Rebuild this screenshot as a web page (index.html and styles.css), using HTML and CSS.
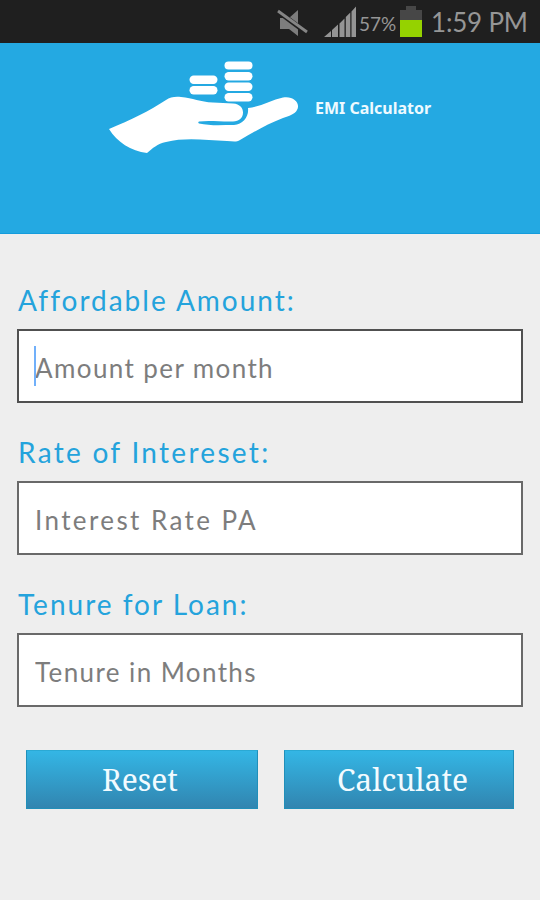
FILE: index.html
```html
<!DOCTYPE html>
<html lang="en">
<head>
    <meta charset="UTF-8">
    <meta name="viewport" content="width=device-width, initial-scale=1.0">
    <title>EMI Calculator</title>
    <link rel="stylesheet" href="styles.css">
</head>
<body>
    <div class="status-bar">
        <svg class="mute-icon" width="32" height="30" viewBox="0 0 32 30">
            <path d="M3 9h9l9-8v26l-9-7H3z" fill="#7d7d7d"/>
            <path d="M-1 1L30 24" stroke="#1f1f1f" stroke-width="5"/>
            <path d="M1 2L30 23" stroke="#858585" stroke-width="2.800"/>
        </svg>
        <svg class="signal-icon" width="33" height="32" viewBox="0 0 33 32">
            <path d="M0 31L7 25v6zM8 24l6-5.500V31H8zM15.500 17.500l5-5V31h-5zM21.800 11l4.500-4.500V31h-4.500zM27.500 5.500L32 .5V31h-4.500z" fill="#949494"/>
        </svg>
        <span class="battery-level">57%</span>
        <svg class="battery-icon" width="22" height="32" viewBox="0 0 22 32">
            <path d="M6 0h10v4h6v11H0V4h6z" fill="#474747"/>
            <path d="M0 14h22v17H0z" fill="#95d200"/>
        </svg>
        <span class="clock">1:59 PM</span>
    </div>

    <header class="header">
        <svg class="logo" width="190" height="94" viewBox="0 0 190 94">
            <g fill="#fff">
                <rect x="80.500" y="15.500" width="28" height="8.500" rx="4.200"/>
                <rect x="80.500" y="26" width="28" height="8.500" rx="4.200"/>
                <rect x="115.500" y="1.500" width="28" height="8" rx="4"/>
                <rect x="115.500" y="12" width="28" height="8.500" rx="4.200"/>
                <rect x="115.500" y="22.500" width="28" height="8.500" rx="4.200"/>
                <rect x="115.500" y="33" width="28" height="8.500" rx="4.200"/>
                <path d="M0 69C22 60 40 51 57 40C61 37 66 36.500 72 37C84 38 91 42 104 42.500L124 43.500C131 44 134 48 134 52.500C134 58 130 61.500 124 61.500C113 62 101 60 90 61.500C89 62 89 63 90 63.500C101 66 113 65 125 65C134 64 140 57 139 48C151 47 162 40 174 37.500C184 35.500 192 43 188 50C186 54 180 56 174 58C158 64 145 72 131 80C127 82.500 123 81 118 81C97 80 76 77 57 82C48 84 44 88 38 93C22 91 8 82 0 69z"/>
            </g>
        </svg>
        <h1 class="app-title">EMI Calculator</h1>
    </header>

    <form class="emi-form">
        <div class="form-group">
            <label class="label-amount" for="amount">Affordable Amount:</label>
            <div class="field active">
                <input type="text" id="amount" class="input-amount" placeholder="Amount per month">
                <span class="caret"></span>
            </div>
        </div>

        <div class="form-group">
            <label class="label-rate" for="rate">Rate of Intereset:</label>
            <div class="field">
                <input type="text" id="rate" class="input-rate" placeholder="Interest Rate PA">
            </div>
        </div>

        <div class="form-group">
            <label class="label-tenure" for="tenure">Tenure for Loan:</label>
            <div class="field">
                <input type="text" id="tenure" class="input-tenure" placeholder="Tenure in Months">
            </div>
        </div>

        <div class="buttons">
            <button type="reset" class="btn btn-reset">Reset</button>
            <button type="button" class="btn btn-calculate">Calculate</button>
        </div>
    </form>
</body>
</html>
```
FILE: styles.css
```css
* {
    margin: 0;
    padding: 0;
    box-sizing: border-box;
}

body {
    height: 900px;
    background-color: #eeeeee;
    font-family: 'Lato', sans-serif;
    overflow: hidden;
}

.status-bar {
    height: 43px;
    background-color: #1f1f1f;
    color: #969696;
    display: flex;
    align-items: flex-start;
    padding: 6px 0 0 277px;
    white-space: nowrap;
}

.mute-icon {
    flex: none;
    margin-top: 3px;
}

.signal-icon {
    flex: none;
    margin-left: 15px;
}

.battery-level {
    flex: none;
    width: 40px;
    margin-left: 2px;
    font-size: 19px;
    line-height: 35px;
}

.battery-icon {
    flex: none;
    margin-left: 1px;
}

.clock {
    margin-left: 9px;
    font-size: 26px;
    line-height: 32px;
    letter-spacing: -0.2px;
}

.header {
    height: 191px;
    background-color: #24a9e2;
    border-bottom: 1px solid #149cdc;
    display: flex;
    align-items: flex-start;
    padding: 17px 0 0 109px;
}

.logo {
    flex: none;
}

.app-title {
    margin: 37px 0 0 16px;
    font-family: 'Noto Sans', sans-serif;
    font-size: 16px;
    font-weight: 700;
    line-height: 22px;
    color: #eefaff;
    white-space: nowrap;
}

.emi-form {
    padding: 47px 17px 0;
}

.form-group {
    height: 152px;
}

label {
    display: block;
    height: 48px;
    padding-left: 1px;
    font-size: 28px;
    line-height: 38px;
    color: #24a3dc;
    white-space: nowrap;
}

.label-amount {
    letter-spacing: 2px;
}

.label-rate {
    letter-spacing: 2.3px;
}

.label-tenure {
    letter-spacing: 2px;
}

.field {
    position: relative;
    height: 74px;
    background-color: #fff;
    border: 2px solid #696969;
}

.active {
    border-color: #505050;
}

input {
    display: block;
    width: 100%;
    height: 70px;
    padding: 4px 16px 0;
    border: none;
    outline: none;
    background: transparent;
    font-family: inherit;
    font-size: 26px;
    color: #333;
}

input::placeholder {
    color: #7d7d7d;
}

.input-amount,
.input-tenure {
    letter-spacing: 1.4px;
}

.input-rate {
    letter-spacing: 2.4px;
}

/* text cursor of the focused field */
.caret {
    position: absolute;
    left: 15px;
    top: 15px;
    width: 2px;
    height: 40px;
    background-color: #71b0fa;
}

.buttons {
    display: flex;
    gap: 26px;
    padding: 13px 9px 0;
}

.btn {
    height: 59px;
    border: 1px solid #218fb9;
    border-top-color: #2ba9d4;
    background: linear-gradient(#34b6e5, #3185b0);
    font-family: 'Noto Serif', 'Droid Serif', 'DejaVu Serif', serif;
    font-size: 30px;
    color: #f2fbff;
}

.btn-reset {
    width: 232px;
    padding-right: 4px;
}

.btn-calculate {
    width: 230px;
    padding-left: 7px;
}
```
